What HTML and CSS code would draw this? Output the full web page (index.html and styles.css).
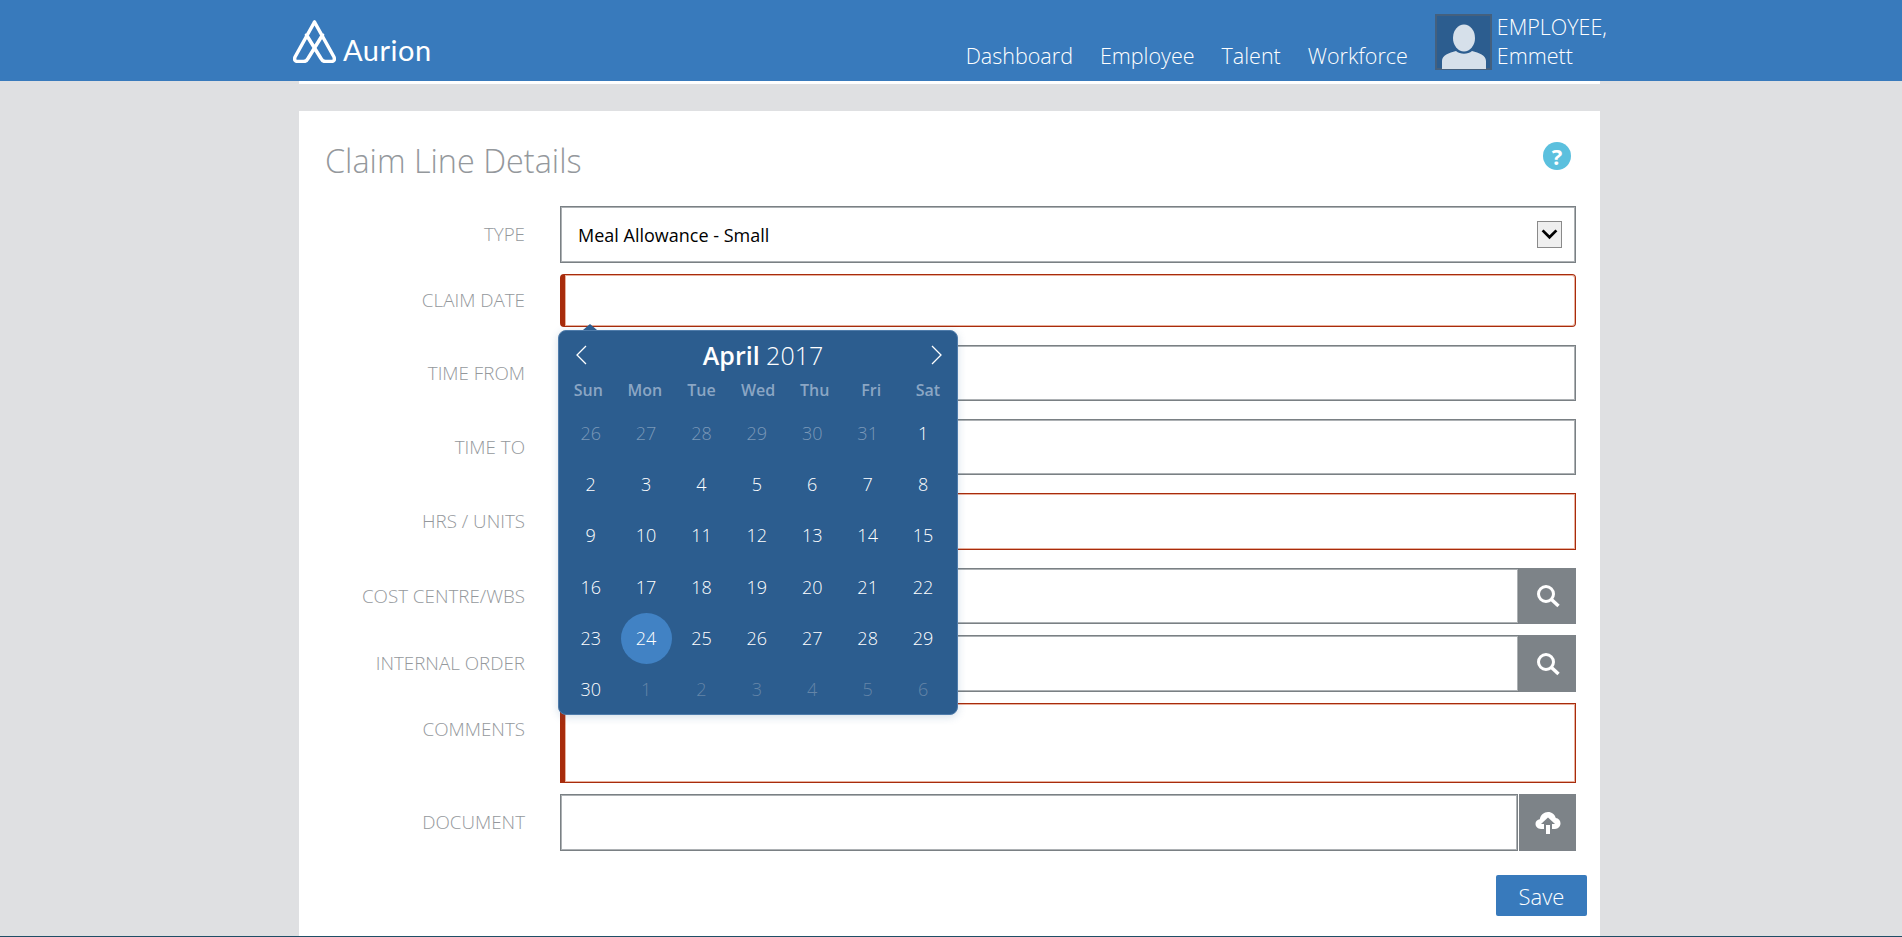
FILE: index.html
```html
<!DOCTYPE html>
<html lang="en">

<head>
    <meta charset="UTF-8">
    <title>Claim Line Details</title>
    <link rel="stylesheet" href="styles.css">
</head>

<body>

    <header class="top-bar">
        <div class="logo">
            <svg class="logo-mark" viewBox="0 0 43 43" width="43" height="43">
                <path d="M21.500 2 L41 37 Q42.500 41.500 38 41.500 L32.500 41.500 Q29.500 41.500 28 38.500 L13.500 15 M21.500 2 L2 37 Q0.500 41.500 5 41.500 L10.500 41.500 Q13.500 41.500 15 38.500 L29.500 15" fill="none" stroke="#fff" stroke-width="3.500" stroke-linejoin="round" stroke-linecap="round" />
            </svg>
            <span class="logo-text">Aurion</span>
        </div>
        <nav class="main-nav">
            <a href="#">Dashboard</a>
            <a href="#">Employee</a>
            <a href="#">Talent</a>
            <a href="#">Workforce</a>
        </nav>
        <div class="user">
            <svg class="avatar" viewBox="0 0 57 56" width="57" height="56">
                <rect x="1" y="1" width="55" height="54" fill="#2c5d8f" stroke="#44607e" stroke-width="2" />
                <ellipse cx="29" cy="24" rx="11" ry="13.500" fill="#d6e0ea" />
                <path d="M7 55 L7 47 C7 41 14 39 21 37 C25 40.500 33 40.500 37 37 C44 39 51 41 51 47 L51 55 Z" fill="#d6e0ea" />
            </svg>
            <div class="user-name">EMPLOYEE,<br>Emmett</div>
        </div>
    </header>

    <main class="page">
        <div class="strip"></div>

        <section class="card">
            <div class="card-head">
                <h1>Claim Line Details</h1>
                <span class="help">?</span>
            </div>

            <form class="claim-form">
                <div class="row gap-sm">
                    <label>TYPE</label>
                    <div class="select-box h57">
                        <span>Meal Allowance - Small</span>
                        <span class="select-arrow">
                            <svg viewBox="0 0 25 27" width="23" height="25">
                                <path d="M5 9 L12.500 16.500 L20 9" fill="none" stroke="#000" stroke-width="3" />
                            </svg>
                        </span>
                    </div>
                </div>

                <!-- date picker hangs off this row -->
                <div class="row gap-lg">
                    <label>CLAIM DATE</label>
                    <div class="date-wrap">
                        <input type="text" class="error rounded h53">
                        <div class="calendar">
                            <div class="cal-head">
                                <svg viewBox="0 0 12 20" width="12" height="20">
                                    <path d="M11 1 L2 10 L11 19" fill="none" stroke="#fff" stroke-width="1.300" />
                                </svg>
                                <div class="cal-title"><b>April</b> 2017</div>
                                <svg viewBox="0 0 12 20" width="12" height="20">
                                    <path d="M1 1 L10 10 L1 19" fill="none" stroke="#fff" stroke-width="1.300" />
                                </svg>
                            </div>
                            <div class="cal-days">
                                <span>Sun</span><span>Mon</span><span>Tue</span><span>Wed</span><span>Thu</span><span>Fri</span><span>Sat</span>
                            </div>
                            <div class="cal-grid">
                                <span class="old">26</span><span class="old">27</span><span class="old">28</span><span class="old">29</span><span class="old">30</span><span class="old">31</span><span>1</span>
                                <span>2</span><span>3</span><span>4</span><span>5</span><span>6</span><span>7</span><span>8</span>
                                <span>9</span><span>10</span><span>11</span><span>12</span><span>13</span><span>14</span><span>15</span>
                                <span>16</span><span>17</span><span>18</span><span>19</span><span>20</span><span>21</span><span>22</span>
                                <span>23</span><span class="today">24</span><span>25</span><span>26</span><span>27</span><span>28</span><span>29</span>
                                <span>30</span><span class="next">1</span><span class="next">2</span><span class="next">3</span><span class="next">4</span><span class="next">5</span><span class="next">6</span>
                            </div>
                        </div>
                    </div>
                </div>

                <div class="row gap-lg">
                    <label>TIME FROM</label>
                    <input type="text" class="h56">
                </div>

                <div class="row gap-lg">
                    <label>TIME TO</label>
                    <input type="text" class="h56">
                </div>

                <div class="row gap-lg">
                    <label>HRS / UNITS</label>
                    <input type="text" class="error h57">
                </div>

                <div class="row gap-sm">
                    <label>COST CENTRE/WBS</label>
                    <div class="input-group h56">
                        <input type="text">
                        <button type="button" class="icon-btn">
                            <svg viewBox="0 0 24 24" width="24" height="24">
                                <circle cx="10" cy="10" r="7.500" fill="none" stroke="#fff" stroke-width="3" />
                                <path d="M15.500 15.500 L22.500 22" stroke="#fff" stroke-width="3.500" />
                            </svg>
                        </button>
                    </div>
                </div>

                <div class="row gap-sm">
                    <label>INTERNAL ORDER</label>
                    <div class="input-group h57">
                        <input type="text">
                        <button type="button" class="icon-btn">
                            <svg viewBox="0 0 24 24" width="24" height="24">
                                <circle cx="10" cy="10" r="7.500" fill="none" stroke="#fff" stroke-width="3" />
                                <path d="M15.500 15.500 L22.500 22" stroke="#fff" stroke-width="3.500" />
                            </svg>
                        </button>
                    </div>
                </div>

                <div class="row gap-sm row-top">
                    <label>COMMENTS</label>
                    <textarea class="error h80"></textarea>
                </div>

                <div class="row">
                    <label>DOCUMENT</label>
                    <div class="input-group h57">
                        <input type="text">
                        <button type="button" class="icon-btn upload">
                            <svg viewBox="0 0 26 24" width="26" height="24">
                                <path d="M6 18 C2.500 18 0.500 15.500 0.500 12.800 C0.500 10.300 2.300 8.500 4.800 8.300 C5.500 4 9 1 13 1 C17 1 19.800 3.500 20.800 7 C23.500 7.300 25.500 9.500 25.500 12.300 C25.500 15.500 23 18 20 18 L17 18 L17 13 L20 13 L13 6.500 L6 13 L9 13 L9 18 Z" fill="#fff" />
                                <path d="M11 14 L15 14 L15 23 L11 23 Z" fill="#fff" />
                            </svg>
                        </button>
                    </div>
                </div>

                <div class="form-actions">
                    <button type="button" class="save-btn">Save</button>
                </div>
            </form>
        </section>
    </main>

    <div class="bottom-line"></div>

</body>

</html>
```

FILE: styles.css
```css
/* General Styles */
* {
    box-sizing: border-box;
}

body {
    background: #dfe0e2;
    display: flex;
    flex-direction: column;
    height: 100vh;
    margin: 0;
    overflow: hidden;
    font-family: "Open Sans", "Liberation Sans", sans-serif;
    font-weight: 300;
}

/* Top bar */
.top-bar {
    height: 81px;
    flex: none;
    background: #387abc;
    color: #fff;
    display: flex;
    padding: 0 295px 0 293px;
}

.logo {
    display: flex;
    align-items: flex-end;
    padding-bottom: 18px;
    gap: 7px;
}

.logo-mark {
    display: block;
}

.logo-text {
    font-family: "Lato", sans-serif;
    font-size: 29px;
    line-height: 28px;
    font-weight: 400;
    letter-spacing: 0.5px;
    margin-bottom: -1px;
}

.main-nav {
    margin-left: auto;
    display: flex;
    gap: 27px;
    padding-top: 40px;
}

.main-nav a {
    color: #fff;
    text-decoration: none;
    font-size: 21.500px;
    line-height: 32px;
}

.user {
    display: flex;
    margin-left: 27px;
    padding-top: 14px;
    gap: 5px;
}

.avatar {
    display: block;
}

.user-name {
    font-size: 21.500px;
    line-height: 29px;
    margin-top: -2px;
}

/* Page */
.page {
    flex: 1;
    width: 1301px;
    margin-left: 299px;
    display: flex;
    flex-direction: column;
    min-height: 0;
}

.strip {
    height: 3px;
    background: #fff;
    flex: none;
    margin-bottom: 27px;
}

.card {
    flex: 1;
    background: #fff;
    padding: 30px 24px 0 27px;
}

.card-head {
    display: flex;
    justify-content: space-between;
    height: 40px;
    margin-bottom: 25px;
}

h1 {
    margin: -1px 0 0 -1px;
    font-size: 32.400px;
    line-height: 40px;
    font-weight: 300;
    color: #94989c;
}

.help {
    width: 28px;
    height: 28px;
    margin: 1px 5px 0 0;
    border-radius: 50%;
    background: #5bc0de;
    color: #fff;
    font-size: 22px;
    font-weight: 700;
    line-height: 28px;
    text-align: center;
}

/* Form rows */
.row {
    display: grid;
    grid-template-columns: 199px 1fr;
    column-gap: 35px;
    align-items: center;
}

.gap-sm {
    margin-bottom: 11px;
}

.gap-lg {
    margin-bottom: 18px;
}

.row-top {
    align-items: start;
}

.row-top label {
    line-height: 52px;
}

label {
    font-size: 18.800px;
    color: #94989c;
    text-align: right;
    padding-bottom: 1px;
}

input,
textarea,
.select-box {
    display: block;
    width: 100%;
    margin: 0;
    border: 1px solid #7a8084;
    border-radius: 0;
    box-shadow: inset 0 0 0 1px #adb1b4;
    background: #fff;
    font-family: inherit;
    resize: none;
    outline: none;
}

.h53 { height: 53px; }
.h56 { height: 56px; }
.h57 { height: 57px; }
.h80 { height: 80px; }

.select-box {
    display: flex;
    align-items: center;
    justify-content: space-between;
    padding: 0 13px 0 17px;
    color: #000;
    font-size: 18px;
    font-weight: 400;
}

.select-arrow {
    width: 25px;
    height: 27px;
    border: 1px solid #8a8a8a;
    background: #efefef;
    display: block;
}

.select-arrow svg {
    display: block;
}

.error {
    border: 1px solid #a82c0c;
    border-left: 5px solid #a82c0c;
    box-shadow: inset 0 0 0 1px #e8b09c;
}

.rounded {
    border-radius: 4px;
}

.input-group {
    display: flex;
}

.input-group input {
    flex: 1;
    height: 100%;
    min-width: 0;
}

.icon-btn {
    width: 57px;
    flex: none;
    padding: 0;
    border: none;
    background: #7d8388;
    display: flex;
    align-items: center;
    justify-content: center;
}

.icon-btn.upload {
    margin-left: 1px;
}

.form-actions {
    display: flex;
    justify-content: flex-end;
    margin: 24px -11px 0 0;
}

.save-btn {
    width: 91px;
    height: 41px;
    border: none;
    border-radius: 2px;
    background: #387abc;
    color: #fff;
    font-family: inherit;
    font-size: 22px;
    font-weight: 300;
    padding: 0;
}

/* Date picker */
.date-wrap {
    position: relative;
}

.calendar {
    position: absolute;
    left: -2px;
    top: 56px;
    width: 400px;
    height: 385px;
    z-index: 5;
    background: #2c5d8f;
    border: 1px solid #4f7cab;
    border-radius: 8px;
    box-shadow: 0 2px 8px rgba(44, 93, 143, 0.2);
    color: #fff;
    padding: 0 4px;
}

.calendar::before {
    content: "";
    position: absolute;
    left: 24px;
    top: -7px;
    border-left: 7px solid transparent;
    border-right: 7px solid transparent;
    border-bottom: 6px solid #2c5d8f;
}

.cal-head {
    height: 48px;
    display: flex;
    align-items: center;
    justify-content: space-between;
    padding: 1px 10px 1px 12px;
}

.cal-title {
    font-size: 25px;
    line-height: 36px;
    margin-left: 8px;
}

.cal-title b {
    font-weight: 600;
}

.cal-days {
    display: grid;
    grid-template-columns: repeat(7, 56.600px);
    margin-left: -3px;
    height: 23px;
    font-size: 16px;
    line-height: 23px;
    font-weight: 600;
    color: #8ba6c4;
    text-align: center;
}

.cal-grid {
    display: grid;
    grid-template-columns: repeat(7, 55.400px);
    grid-auto-rows: 51.300px;
    margin-top: 5.500px;
    font-size: 18px;
    text-align: center;
    align-items: center;
    justify-items: center;
}

.cal-grid span {
    width: 51px;
    line-height: 51px;
    height: 51px;
    border-radius: 50%;
}

.cal-grid .old {
    color: #7a98b8;
}

.cal-grid .next {
    color: #6485a8;
}

.cal-grid .today {
    background: #4182c4;
}

.bottom-line {
    height: 1px;
    flex: none;
    background: #1f4e66;
}
```
